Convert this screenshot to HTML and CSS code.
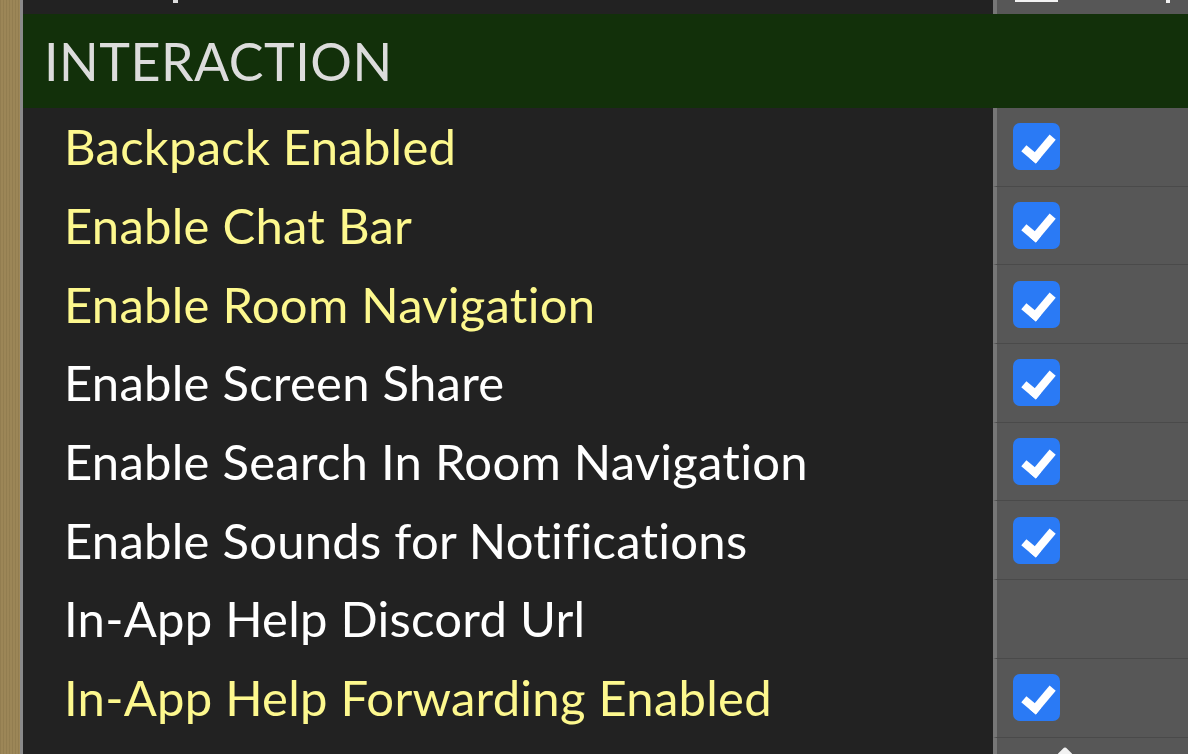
FILE: index.html
```html
<!DOCTYPE html>
<html lang="en">
  <head>
    <meta charset="UTF-8" />
    <title>Room Settings</title>
    <link rel="stylesheet" href="styles.css">
  </head>
  <body>
    <div class="wall"></div>
    <div class="edge"></div>
    <div class="panel">
      <div class="row partial-top">
        <div class="label"><span class="tail"></span></div>
        <div class="value">
          <span class="stub"></span>
          <span class="dot"></span>
        </div>
      </div>

      <div class="section">INTERACTION</div>

      <div class="row">
        <div class="label custom">Backpack Enabled</div>
        <div class="value"><span class="check"></span></div>
      </div>
      <div class="row">
        <div class="label custom">Enable Chat Bar</div>
        <div class="value"><span class="check"></span></div>
      </div>
      <div class="row">
        <div class="label custom">Enable Room Navigation</div>
        <div class="value"><span class="check"></span></div>
      </div>
      <div class="row">
        <div class="label">Enable Screen Share</div>
        <div class="value"><span class="check"></span></div>
      </div>
      <div class="row">
        <div class="label">Enable Search In Room Navigation</div>
        <div class="value"><span class="check"></span></div>
      </div>
      <div class="row">
        <div class="label">Enable Sounds for Notifications</div>
        <div class="value"><span class="check"></span></div>
      </div>
      <div class="row">
        <div class="label">In-App Help Discord Url</div>
        <div class="value"></div>
      </div>
      <div class="row">
        <div class="label custom">In-App Help Forwarding Enabled</div>
        <div class="value"><span class="check"></span></div>
      </div>
      <div class="row partial-bottom">
        <div class="label"></div>
        <div class="value">
          <span class="field"></span>
          <span class="pencil"></span>
        </div>
      </div>
    </div>
  </body>
</html>
```

FILE: styles.css
```css
html,
body {
  height: 100%;
}

body {
  margin: 0;
  display: flex;
  overflow: hidden;
  background-color: #222;
  font-family: "Lato", "Open Sans", sans-serif;
  font-variant-ligatures: none;
}

.wall {
  width: 20px;
  flex-shrink: 0;
  background-color: #9a8454;
  background-image: repeating-linear-gradient(
    90deg,
    rgba(0, 0, 0, 0.05) 0 1px,
    rgba(255, 255, 255, 0.02) 1px 3px
  );
}

.edge {
  width: 3px;
  flex-shrink: 0;
  background-color: #8a8a8a;
}

.panel {
  flex: 1;
  display: flex;
  flex-direction: column;
}

.row {
  display: grid;
  grid-template-columns: 970px 1fr;
  height: 78.7px;
  flex-shrink: 0;
}

.label {
  display: flex;
  align-items: center;
  padding-left: 41px;
  padding-bottom: 2px;
  background-color: #222;
  color: #fff;
  font-size: 49px;
  letter-spacing: 0.25px;
  white-space: nowrap;
  overflow: hidden;
}

.label.custom {
  color: #fdf88e;
}

.value {
  position: relative;
  display: flex;
  align-items: center;
  box-sizing: border-box;
  padding-left: 16px;
  background-color: #575757;
  border-left: 4px solid #777;
  border-bottom: 1px solid #4a4a4a;
}

.check {
  position: relative;
  width: 47px;
  height: 47px;
  border-radius: 7px;
  background-color: #2a7af5;
}

.check::after {
  content: "";
  position: absolute;
  left: 16px;
  top: 7px;
  width: 11px;
  height: 23px;
  border-right: 8px solid #fff;
  border-bottom: 8px solid #fff;
  transform: rotate(40deg);
}

.section {
  height: 94px;
  flex-shrink: 0;
  display: flex;
  align-items: center;
  padding-left: 21px;
  background-color: #12300a;
  color: #dcdcdc;
  font-size: 52px;
  letter-spacing: 0.5px;
}

.partial-top {
  height: 14px;
}

.partial-top .label {
  align-items: flex-start;
  padding-left: 150px;
}

.partial-top .tail {
  display: block;
  width: 5px;
  height: 3px;
  background-color: #ddd;
}

.partial-top .value {
  align-items: flex-start;
  border-bottom: none;
}

.stub {
  width: 43px;
  height: 2px;
  margin-left: 2px;
  background-color: #f2f2f2;
}

.dot {
  position: absolute;
  right: 18px;
  top: 0;
  width: 4px;
  height: 3px;
  background-color: #f2f2f2;
}

.partial-bottom {
  height: 20px;
}

.partial-bottom .value {
  align-items: flex-end;
  border-bottom: none;
}

.field {
  width: 35px;
  height: 3px;
  margin-left: 2px;
  border-radius: 2px 2px 0 0;
  background-color: #f2f2f2;
}

.pencil {
  position: absolute;
  left: 62px;
  bottom: -3px;
  width: 12px;
  height: 12px;
  border-radius: 3px;
  background-color: #f2f2f2;
  transform: rotate(45deg);
}
```
